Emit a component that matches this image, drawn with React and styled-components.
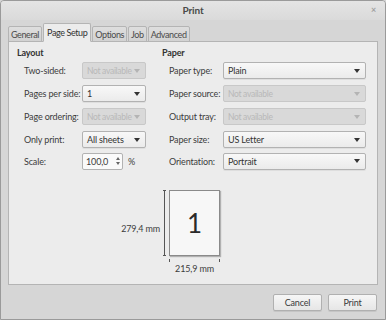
import React from 'react';
import styled, { createGlobalStyle } from 'styled-components';

const Global = createGlobalStyle`
    html, body {
        margin: 0;
        padding: 0;
        background: #d6d6d6;
    }
    body {
        font-family: Lato, "Open Sans", sans-serif;
        font-size: 9px;
        letter-spacing: -0.15px;
        color: #3c3c3c;
    }
`;

const Window = styled.div`
    width: 386px;
    height: 320px;
    box-sizing: border-box;
    border: 1px solid #9a9a9a;
    border-radius: 4px 4px 0 0;
    background: #d6d6d6;
    display: flex;
    flex-direction: column;
    overflow: hidden;
`;

const TitleBar = styled.div`
    height: 18px;
    padding-bottom: 1px;
    display: flex;
    align-items: center;
    justify-content: center;
    position: relative;
    background: linear-gradient(#e4e4e4, #dadada);
    font-weight: bold;
    font-size: 10px;
    color: #4a4a4a;
`;

const Close = styled.span`
    position: absolute;
    right: 9px;
    top: 3px;
    font-size: 9px;
    color: #a0a0a0;
`;

const Body = styled.div`
    flex: 1;
    display: flex;
    flex-direction: column;
    padding: 3px 7px 0 7px;
`;

const TabBar = styled.div`
    display: flex;
    align-items: flex-end;
    gap: 1px;
    height: 19px;
    position: relative;
    z-index: 1;
    margin-bottom: -1px;
`;

const Tab = styled.div`
    height: ${p => (p.active ? '19px' : '16px')};
    box-sizing: border-box;
    padding: 0 ${p => (p.active ? '3px' : '2px')};
    display: flex;
    align-items: center;
    white-space: nowrap;
    letter-spacing: -0.4px;
    border: 1px solid #b4b4b4;
    border-bottom: ${p => (p.active ? '1px solid #ececec' : '1px solid #b4b4b4')};
    border-radius: 2px 2px 0 0;
    background: ${p => (p.active ? '#ececec' : 'linear-gradient(#dedede, #d2d2d2)')};
    color: ${p => (p.active ? '#333' : '#4a4a4a')};
    padding-top: ${p => (p.active ? '0' : '1px')};
`;

const Panel = styled.div`
    height: 244px;
    box-sizing: border-box;
    border: 1px solid #b4b4b4;
    background: #ececec;
    display: flex;
    flex-direction: column;
    padding: 4px 0 0 8px;
`;

const Columns = styled.div`
    display: flex;
`;

const Section = styled.div`
    width: ${p => p.width}px;
    display: flex;
    flex-direction: column;
`;

const Heading = styled.div`
    font-weight: bold;
    color: #333;
    height: 13px;
    line-height: 13px;
`;

const Row = styled.div`
    display: flex;
    align-items: center;
    height: ${p => p.h || 23}px;
    padding-left: 7px;
    white-space: nowrap;
`;

const Label = styled.div`
    width: ${p => p.width}px;
    flex: none;
    color: #3c3c3c;
`;

const Combo = styled.div`
    width: ${p => p.width}px;
    height: 17px;
    box-sizing: border-box;
    border: 1px solid ${p => (p.disabled ? '#c8c8c8' : '#b2b2b2')};
    border-radius: 2px;
    background: ${p => (p.disabled ? '#d9d9d9' : 'linear-gradient(#f8f8f8, #ebebeb)')};
    color: ${p => (p.disabled ? '#b8b8b8' : '#333')};
    font-size: ${p => (p.disabled ? '8.5px' : '9px')};
    letter-spacing: ${p => (p.disabled ? '-0.3px' : '-0.15px')};
    display: flex;
    align-items: center;
    justify-content: space-between;
    padding: 0 5px 0 4px;
    overflow: hidden;
    box-shadow: ${p => (p.disabled ? 'none' : '0 1px 0 rgba(0,0,0,0.06)')};
`;

const Arrow = styled.span`
    flex: none;
    width: 0;
    height: 0;
    border-left: 3px solid transparent;
    border-right: 3px solid transparent;
    border-top: 4px solid ${p => (p.disabled ? '#b4b4b4' : '#333')};
`;

const Spin = styled.div`
    width: 41px;
    height: 17px;
    box-sizing: border-box;
    border: 1px solid #b2b2b2;
    border-radius: 2px;
    background: #fafafa;
    display: flex;
    align-items: center;
    padding-left: 3px;
    justify-content: space-between;
`;

const SpinArrows = styled.div`
    width: 9px;
    height: 100%;
    display: flex;
    flex-direction: column;
    align-items: center;
    justify-content: center;
    gap: 2px;
`;

const Tri = styled.span`
    width: 0;
    height: 0;
    border-left: 2px solid transparent;
    border-right: 2px solid transparent;
    ${p => (p.up ? 'border-bottom: 3px solid #666;' : 'border-top: 3px solid #666;')}
`;

const Unit = styled.span`
    margin-left: 5px;
`;

const Preview = styled.div`
    display: grid;
    grid-template-columns: 143px 1px 51px;
    grid-template-rows: 66px 16px;
    margin-top: 19px;
    column-gap: 4px;
`;

const HeightLabel = styled.div`
    text-align: right;
    align-self: center;
    padding-top: 10px;
`;

const VLine = styled.div`
    width: 1px;
    background: #555;
    position: relative;
    &::before, &::after {
        content: '';
        position: absolute;
        left: -1px;
        width: 3px;
        height: 1px;
        background: #555;
    }
    &::before { top: 0; }
    &::after { bottom: 0; }
`;

const Page = styled.div`
    box-sizing: border-box;
    border: 1px solid #8a8a8a;
    background: #f7f7f7;
    box-shadow: 1px 1px 1px rgba(0,0,0,0.25);
    display: flex;
    align-items: center;
    justify-content: center;
    font-size: 26px;
    color: #2a2a2a;
`;

const WidthCell = styled.div`
    grid-column: 3;
    display: flex;
    flex-direction: column;
    align-items: center;
    padding-top: 4px;
`;

const HLine = styled.div`
    width: 100%;
    height: 1px;
    background: #555;
    position: relative;
    &::before, &::after {
        content: '';
        position: absolute;
        top: -1px;
        width: 1px;
        height: 3px;
        background: #555;
    }
    &::before { left: 0; }
    &::after { right: 0; }
`;

const WidthLabel = styled.div`
    margin-top: 3px;
    white-space: nowrap;
`;

const Footer = styled.div`
    display: flex;
    justify-content: flex-end;
    gap: 6px;
    padding: 9px 1px 0 0;
`;

const Button = styled.div`
    width: 49px;
    height: 17px;
    box-sizing: border-box;
    border: 1px solid #b0b0b0;
    border-radius: 2px;
    background: linear-gradient(#f6f6f6, #e6e6e6);
    display: flex;
    align-items: center;
    justify-content: center;
    color: #3a3a3a;
    box-shadow: 0 1px 0 rgba(0,0,0,0.08);
`;

const layoutRows = [
    { label: 'Two-sided:', value: 'Not available', disabled: true },
    { label: 'Pages per side:', value: '1' },
    { label: 'Page ordering:', value: 'Not available', disabled: true },
    { label: 'Only print:', value: 'All sheets' },
];

const paperRows = [
    { label: 'Paper type:', value: 'Plain' },
    { label: 'Paper source:', value: 'Not available', disabled: true },
    { label: 'Output tray:', value: 'Not available', disabled: true },
    { label: 'Paper size:', value: 'US Letter' },
    { label: 'Orientation:', value: 'Portrait' },
];

function Select({ width, value, disabled }) {
    return (
        <Combo width={width} disabled={disabled}>
            <span>{value}</span>
            <Arrow disabled={disabled} />
        </Combo>
    );
}

export default function App() {
    return (
        <>
            <Global />
            <Window>
                <TitleBar>
                    Print
                    <Close>×</Close>
                </TitleBar>
                <Body>
                    <TabBar>
                        <Tab>General</Tab>
                        <Tab active>Page Setup</Tab>
                        <Tab>Options</Tab>
                        <Tab>Job</Tab>
                        <Tab>Advanced</Tab>
                    </TabBar>
                    <Panel>
                        <Columns>
                            <Section width={145}>
                                <Heading>Layout</Heading>
                                {layoutRows.map(r => (
                                    <Row key={r.label}>
                                        <Label width={58}>{r.label}</Label>
                                        <Select width={64} value={r.value} disabled={r.disabled} />
                                    </Row>
                                ))}
                                <Row h={20}>
                                    <Label width={58}>Scale:</Label>
                                    <Spin>
                                        <span>100,0</span>
                                        <SpinArrows>
                                            <Tri up />
                                            <Tri />
                                        </SpinArrows>
                                    </Spin>
                                    <Unit>%</Unit>
                                </Row>
                            </Section>
                            <Section width={210}>
                                <Heading>Paper</Heading>
                                {paperRows.map((r, i) => (
                                    <Row key={r.label} h={i === 4 ? 20 : 23}>
                                        <Label width={54}>{r.label}</Label>
                                        <Select width={143} value={r.value} disabled={r.disabled} />
                                    </Row>
                                ))}
                            </Section>
                        </Columns>
                        <Preview>
                            <HeightLabel>279,4 mm</HeightLabel>
                            <VLine />
                            <Page>1</Page>
                            <WidthCell>
                                <HLine />
                                <WidthLabel>215,9 mm</WidthLabel>
                            </WidthCell>
                        </Preview>
                    </Panel>
                    <Footer>
                        <Button>Cancel</Button>
                        <Button>Print</Button>
                    </Footer>
                </Body>
            </Window>
        </>
    );
}
